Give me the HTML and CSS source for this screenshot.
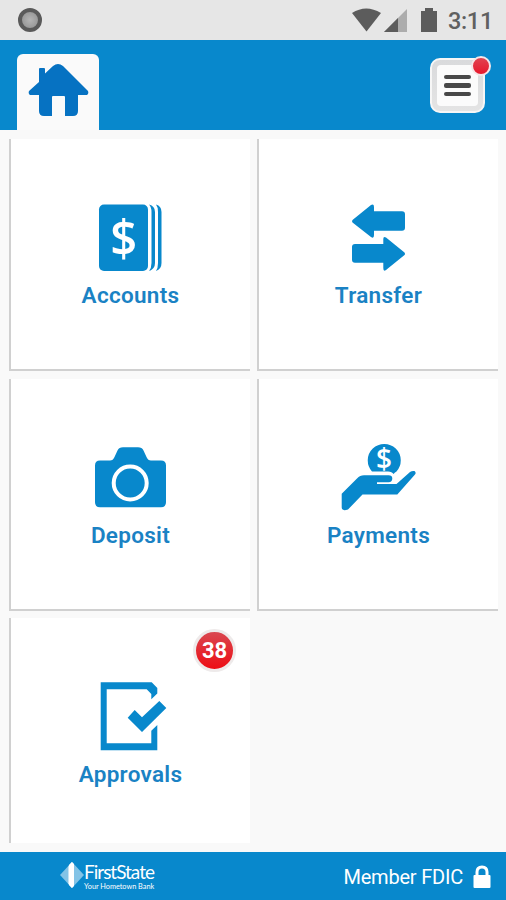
FILE: index.html
```html
<!DOCTYPE html>
<html lang="en">
<head>
    <meta charset="UTF-8">
    <meta name="viewport" content="width=device-width, initial-scale=1.0">
    <title>FirstState Mobile</title>
    <link rel="stylesheet" href="styles.css">
</head>
<body>
    <div class="status-bar">
        <span class="status-dot"></span>
        <div class="status-right">
            <svg class="status-icons" width="88" height="26" viewBox="0 0 88 26">
                <path d="M1 5Q15-4 30 5L15.500 23.500Z" fill="#5c5c5c"/>
                <path d="M56 1V24H33Z" fill="#acacac"/>
                <path d="M47 10V24H33Z" fill="#5c5c5c"/>
                <path d="M70 3H74V0H82V3H86V24H70Z" fill="#5c5c5c"/>
            </svg>
            <span class="clock">3:11</span>
        </div>
    </div>

    <header>
        <a class="home-tab">
            <svg width="62" height="56" viewBox="0 0 62 56">
                <path d="M11 15V5Q11 4 12 4H16Q17 4 17 5V9.500L25 2Q30-2 35 2L60 27Q61 30 59 31H50V47Q50 52 45 52H37V33Q37 32 36 32H25Q24 32 24 33V52H16Q11 52 11 47V31H2Q0 30 1 27L11 18Z"/>
            </svg>
        </a>
        <button class="menu-btn">
            <span class="menu-face">
                <span class="bar"></span>
                <span class="bar"></span>
                <span class="bar"></span>
            </span>
            <span class="alert-dot"></span>
        </button>
    </header>

    <main class="tiles">
        <a class="tile">
            <svg class="tile-icon" viewBox="0 0 100 80">
                <rect x="19" y="6.500" width="49" height="66.500" rx="5"/>
                <path d="M69 6.500Q75 8 75 14V65Q75 71 69 73Q71.500 70 71.500 65V14Q71.500 9 69 6.500Z"/>
                <path d="M76 6.500Q81.500 8 81.500 14V65Q81.500 71 76 73Q78 70 78 65V14Q78 9 76 6.500Z"/>
                <text class="dollar" x="43.800" y="58" textLength="27" lengthAdjust="spacingAndGlyphs">$</text>
            </svg>
            <span class="label">Accounts</span>
        </a>
        <a class="tile">
            <svg class="tile-icon" viewBox="0 0 100 80">
                <path d="M24.500 22L43 7Q46 5.500 46 9V13.300H74Q77 13.300 77 16.300V29.700Q77 32.700 74 32.700H46V37Q46 41 43 39L24.500 24.500Q23.500 23 24.500 22Z"/>
                <path d="M76.500 54.500L58 39.500Q55.300 38 55.300 41V46H27Q24 46 24 49V61.700Q24 64.700 27 64.700H55.300V70Q55.300 74 58 72L76.500 57Q77.500 56 76.500 54.500Z"/>
            </svg>
            <span class="label">Transfer</span>
        </a>
        <a class="tile">
            <svg class="tile-icon" viewBox="0 0 100 80">
                <path d="M20 22.500H30Q33 22.500 34.500 19L37.500 12.500Q39 9.200 43 9.200H58Q62 9.200 63.500 12.500L66.500 19Q68 22.500 71 22.500H81Q86 22.500 86 27.500V64.200Q86 69.200 81 69.200H20Q15 69.200 15 64.200V27.500Q15 22.500 20 22.500Z"/>
                <circle cx="50.200" cy="45" r="16.500" fill="none" stroke="#fff" stroke-width="4"/>
            </svg>
            <span class="label">Deposit</span>
        </a>
        <a class="tile">
            <svg class="tile-icon" viewBox="0 0 100 80">
                <path d="M44 33.500A16.500 16.500 0 1 1 68.500 33.500Q67 34 65.500 36Q64 33.500 60 33.500Z"/>
                <text class="dollar small" x="56" y="31" textLength="16" lengthAdjust="spacingAndGlyphs">$</text>
                <path d="M13.700 55.800L29 40.500Q32 37.200 36 37.200H60.500Q64.300 37.200 64.300 40.500Q64.300 44.200 60.500 44.200H49V46H68.500L82 34Q84 32.500 86.500 33Q88.500 34.500 87 36.500L69.300 56.500H34.500L20 71.500Q13.700 73.500 13.700 69.500Z"/>
            </svg>
            <span class="label">Payments</span>
        </a>
        <a class="tile">
            <span class="badge">38</span>
            <svg class="tile-icon" viewBox="0 0 100 80">
                <path d="M20.700 5.300H71.700L77.300 11V16.500L71.300 22.300V17L66.700 12.300H26.700V66.300H71.300V53.700L77.300 48V73.300H20.700Z"/>
                <path d="M47.700 40.700L54.700 33L62 40.300L79.300 24L86.300 31L62 55Z"/>
            </svg>
            <span class="label">Approvals</span>
        </a>
    </main>

    <footer>
        <div class="logo">
            <svg width="24" height="26" viewBox="0 0 24 26">
                <path d="M12 0L24 13L12 26L0 13Z" fill="#83c3e6"/>
                <path d="M12 0L8 4.500V21.500L12 26Z" fill="#c4e2f3"/>
                <path d="M12 0L14 2V24L12 26L9 23V3Z" fill="#fff"/>
            </svg>
            <div class="logo-text">
                <span class="logo-name">FirstState</span>
                <span class="logo-tag">Your Hometown Bank</span>
            </div>
        </div>
        <div class="fdic">
            <span>Member FDIC</span>
            <svg width="18" height="24" viewBox="0 0 18 24">
                <path d="M4 12V7Q4 2 9 2Q14 2 14 7V12" fill="none" stroke="#fff" stroke-width="3"/>
                <rect x="0.500" y="10" width="17" height="13" rx="1" fill="#fff"/>
            </svg>
        </div>
    </footer>
</body>
</html>
```
FILE: styles.css
```css
* {
    box-sizing: border-box;
}

body {
    font-family: Roboto, sans-serif;
    background-color: #f9f9f9;
    margin: 0;
    height: 900px;
    display: flex;
    flex-direction: column;
    overflow: hidden;
}

.status-bar {
    height: 40px;
    flex: none;
    display: flex;
    justify-content: space-between;
    align-items: center;
    padding: 0 13px 0 18px;
    background-color: #e6e6e6;
}

.status-dot {
    width: 24px;
    height: 24px;
    border-radius: 50%;
    border: 4px solid #5a5a5a;
    background: radial-gradient(#b5b5b5, #8e8e8e);
}

.status-right {
    display: flex;
    align-items: center;
    gap: 9px;
}

.clock {
    font-size: 23.5px;
    font-weight: 500;
    color: #606060;
    padding-top: 2px;
    letter-spacing: -0.3px;
}

.status-icons {
    margin-top: 1px;
}

header {
    height: 90px;
    flex: none;
    display: flex;
    justify-content: space-between;
    align-items: flex-start;
    padding: 14px 21px 0 17px;
    background-color: #0888cc;
}

.home-tab {
    width: 82px;
    height: 76px;
    padding: 10px 0 0 11px;
    border-radius: 6px 6px 0 0;
    background-color: #fafafa;
    fill: #0672c2;
}

.menu-btn {
    position: relative;
    width: 55px;
    height: 55px;
    margin-top: 4px;
    padding: 5px;
    border: 2px solid #f6f6f6;
    border-radius: 10px;
    background: linear-gradient(#d9dadc, #e4e4e4);
}

.menu-face {
    display: flex;
    flex-direction: column;
    justify-content: center;
    align-items: center;
    gap: 4px;
    height: 100%;
    border-radius: 4px;
    background-color: #fbfbfb;
}

.bar {
    width: 27px;
    height: 4.5px;
    border-radius: 2px;
    background-color: #484848;
}

.alert-dot {
    position: absolute;
    top: -4px;
    right: -8px;
    width: 20px;
    height: 20px;
    border: 2px solid #f5e6e8;
    border-radius: 50%;
    background: linear-gradient(#e04350, #e8182c);
}

.tiles {
    flex: none;
    height: 722px;
    display: grid;
    grid-template-columns: 241px 241px;
    grid-template-rows: 232px 232px 225px;
    gap: 7.5px 7px;
    padding: 9px 8px 0 9px;
}

.tile {
    position: relative;
    display: flex;
    flex-direction: column;
    align-items: center;
    padding-top: 59px;
    border-left: 2px solid #d0d0d0;
    border-bottom: 2px solid #d0d0d0;
    background-color: #fff;
}

.tile:last-child {
    border-bottom: none;
}

.tile-icon {
    width: 100px;
    height: 80px;
    margin-right: 2px;
    fill: #0888cc;
}

.dollar {
    font-family: "Open Sans", sans-serif;
    font-size: 51px;
    font-weight: 600;
    text-anchor: middle;
    fill: #fff;
}

.dollar.small {
    font-size: 28px;
}

.label {
    margin-top: 4px;
    font-size: 22.5px;
    line-height: 26px;
    font-weight: 600;
    letter-spacing: 0.3px;
    color: #1a82c4;
}

.badge {
    position: absolute;
    top: 11px;
    right: 14px;
    width: 43px;
    height: 43px;
    border: 3px solid #eeeaea;
    border-radius: 50%;
    background: linear-gradient(#d94750, #ee0d14);
    color: #fff;
    font-size: 22px;
    font-weight: 700;
    line-height: 37px;
    text-align: center;
}

footer {
    height: 48px;
    flex: none;
    display: flex;
    justify-content: space-between;
    align-items: center;
    padding: 0 15px 0 60px;
    background-color: #0888cc;
    color: #fff;
}

.logo {
    display: flex;
    align-items: center;
    padding-bottom: 2px;
}

.logo-text {
    display: flex;
    flex-direction: column;
    padding-top: 3px;
}

.logo-name {
    font-family: Lato, sans-serif;
    font-size: 19px;
    line-height: 19px;
    letter-spacing: -1px;
}

.logo-tag {
    font-family: Lato, sans-serif;
    font-size: 7.3px;
    line-height: 9px;
    padding-top: 1px;
}

.fdic {
    display: flex;
    align-items: center;
    gap: 10px;
    font-size: 20px;
    letter-spacing: -0.2px;
    padding-top: 1px;
}
```
